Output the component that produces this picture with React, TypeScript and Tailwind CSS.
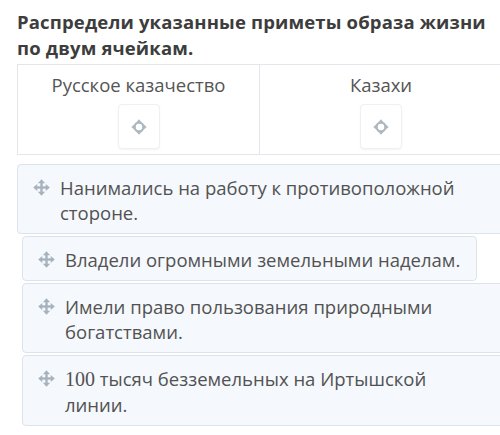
import React from 'react'

const font = { fontFamily: '"Open Sans", "Noto Sans", sans-serif' }

function MoveIcon() {
  return (
    <svg width="17" height="17" viewBox="0 0 16 16" className="shrink-0">
      <g fill="#a6b2bc">
        <rect x="6.9" y="3" width="2.2" height="10" />
        <rect x="3" y="6.9" width="10" height="2.2" />
        <polygon points="8,0.2 11.4,4 4.6,4" />
        <polygon points="8,15.8 11.4,12 4.6,12" />
        <polygon points="0.2,8 4,4.6 4,11.4" />
        <polygon points="15.8,8 12,4.6 12,11.4" />
      </g>
    </svg>
  )
}

function DropIcon() {
  return (
    <svg width="16" height="16" viewBox="0 0 14 14">
      <circle cx="7" cy="7" r="3.8" fill="none" stroke="#aeb8c1" strokeWidth="2" />
      <g fill="#aeb8c1">
        <polygon points="7,0.3 9.5,3 4.5,3" />
        <polygon points="7,13.7 9.5,11 4.5,11" />
        <polygon points="0.3,7 3,4.5 3,9.5" />
        <polygon points="13.7,7 11,4.5 11,9.5" />
      </g>
    </svg>
  )
}

function DropCell({ title, last }: { title: string; last?: boolean }) {
  return (
    <div className={`flex w-[242px] flex-col items-center pt-[7px] pb-[5px] ${last ? '' : 'border-r border-[#e3e6ea]'}`}>
      <div className="text-[18.5px] leading-[25px] text-[#555]">{title}</div>
      <div className="mt-[7px] flex h-[45px] w-[42px] items-center justify-center rounded-[4px] border border-[#eef0f2] bg-white shadow-[0_1px_2px_rgba(0,0,0,0.05)]">
        <DropIcon />
      </div>
    </div>
  )
}

function Card({ children, shift, fit }: { children: React.ReactNode; shift?: boolean; fit?: boolean }) {
  return (
    <div
      className={`flex items-start gap-[10px] rounded-[4px] border border-[#dde3ea] bg-[#f5f8fc] pl-[15px] pr-[16px] pt-[10px] pb-[8px] ${shift ? 'ml-[5px]' : ''} ${fit ? 'self-start' : ''}`}
    >
      <div className="flex h-[25px] items-center">
        <MoveIcon />
      </div>
      <div className="text-[18.5px] leading-[25px] text-[#525252]">{children}</div>
    </div>
  )
}

export default function App() {
  return (
    <div className="h-[435px] w-[500px] overflow-hidden bg-white" style={font}>
      <div className="w-[520px] pl-[17px] pt-[9px]">
        <h1 className="w-[478px] text-[18.5px] font-bold leading-[26px] tracking-[0.15px] text-[#3d3d3d]">
          Распредели указанные приметы образа жизни по двум ячейкам.
        </h1>

        <div className="mt-[3px] flex w-[486px] border border-[#e3e6ea]">
          <DropCell title="Русское казачество" />
          <DropCell title="Казахи" last />
        </div>

        <div className="mt-[9px] flex flex-col gap-[2px]">
          <Card>
            Нанимались на работу к противоположной
            <br />
            стороне.
          </Card>
          <Card shift fit>
            Владели огромными земельными наделам.
          </Card>
          <Card shift>
            Имели право пользования природными
            <br />
            богатствами.
          </Card>
          <Card shift>
            <span className="text-[20px]" style={{ fontFamily: '"Liberation Serif", serif' }}>100</span> тысяч безземельных на Иртышской
            <br />
            линии.
          </Card>
        </div>
      </div>
    </div>
  )
}
